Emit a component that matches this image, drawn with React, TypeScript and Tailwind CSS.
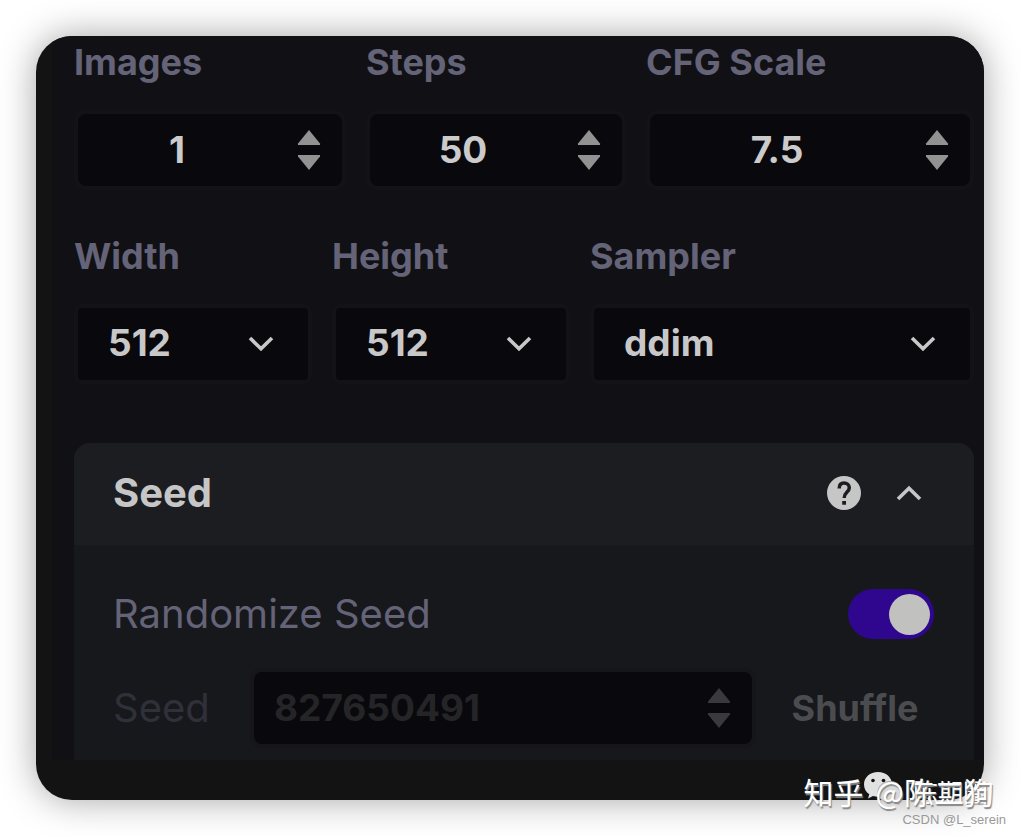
import { useState } from "react";

const LABEL = "block text-[36px] leading-[48px] font-bold text-[#646378]";
const BOX = "flex h-20 w-full rounded-xl border-4 border-[#131317] bg-[#09090d]";

function Stepper({ dim = false, name }: { dim?: boolean; name: string }) {
  return (
    <span className={`flex w-[66px] shrink-0 flex-col items-center justify-center gap-2.5 ${dim ? "text-[#3a3a3c]" : "text-[#929292]"}`}>
      <button type="button" aria-label={`Increase ${name}`} disabled={dim}>
        <svg width="24" height="15" viewBox="0 0 24 15" fill="currentColor" className="block"><path d="M12 0L23 13.5V15H1V13.5Z" /></svg>
      </button>
      <button type="button" aria-label={`Decrease ${name}`} disabled={dim}>
        <svg width="24" height="15" viewBox="0 0 24 15" fill="currentColor" className="block"><path d="M12 15L23 1.5V0H1V1.5Z" /></svg>
      </button>
    </span>
  );
}

function NumberField({ id, label, value }: { id: string; label: string; value: string }) {
  return (
    <div className="flex min-w-0 flex-col gap-6">
      <label htmlFor={id} className={LABEL}>{label}</label>
      <div className={BOX}>
        <input id={id} type="text" inputMode="decimal" defaultValue={value} className="min-w-0 flex-1 bg-transparent text-center text-[37px] font-bold text-[#cbcbcb] outline-none" />
        <Stepper name={label} />
      </div>
    </div>
  );
}

function Chevron({ up = false }: { up?: boolean }) {
  return (
    <svg width="26" height="16" viewBox="0 0 26 16" fill="none" stroke="currentColor" strokeWidth="3.6" className="block">
      <path d={up ? "M2 14L13 3.2L24 14" : "M2 2L13 12.8L24 2"} />
    </svg>
  );
}

function SelectField({ id, label, value }: { id: string; label: string; value: string }) {
  return (
    <div className="flex min-w-0 flex-col gap-6">
      <label htmlFor={id} className={LABEL}>{label}</label>
      <div className="grid h-20 items-center text-[#c8c8c8]">
        <select id={id} defaultValue={value} className="col-start-1 row-start-1 h-20 w-full appearance-none rounded-lg border-4 border-[#131317] bg-[#09090d] pr-16 pb-0.5 pl-[30px] text-[37px] font-bold outline-none">
          <option>{value}</option>
        </select>
        <span className="pointer-events-none col-start-1 row-start-1 mr-[38px] justify-self-end"><Chevron /></span>
      </div>
    </div>
  );
}

function ChatLogo() {
  return (
    <svg width="38" height="34" viewBox="0 0 38 34" className="block">
      <path d="M14 0C6 0 0 5.4 0 12.4C0 16.6 2.1 20 5.3 22.2L4 26.5L9 24C10.600 24.500 12.300 24.700 14 24.700C22 24.700 28 19.400 28 12.400S22 0 14 0Z" fill="#e1e1e1" />
      <circle cx="9" cy="8.500" r="1.800" fill="#131313" />
      <circle cx="19.500" cy="8.500" r="1.800" fill="#131313" />
      <path d="M26 9.500C19 9.500 14 14 14 20S19 30.500 26 30.500C27.500 30.500 29 30.300 30.300 29.800L35 32.500L33.800 28.300C36.400 26.400 38 23.500 38 20C38 14 33 9.500 26 9.500Z" fill="#d9d9d9" stroke="#aaa" />
    </svg>
  );
}

export default function App() {
  const [random, setRandom] = useState(true);
  const [open, setOpen] = useState(true);
  return (
    <div className="relative min-h-screen bg-white p-9 font-[Inter,'Noto_Sans_CJK_SC',sans-serif]">
      <main className="overflow-hidden rounded-[36px] bg-[#131313] pb-10 pl-4 shadow-[0_0_36px_rgba(0,0,0,0.36)]">
        <div className="bg-[#111115] pt-0.5 pr-2.5 pl-[22px]">
          <div className="grid grid-cols-[272fr_260fr_328fr] gap-5">
            <NumberField id="images" label="Images" value="1" />
            <NumberField id="steps" label="Steps" value="50" />
            <NumberField id="cfg" label="CFG Scale" value="7.5" />
          </div>
          <div className="mt-[42px] grid grid-cols-[238fr_238fr_384fr] gap-5">
            <SelectField id="width" label="Width" value="512" />
            <SelectField id="height" label="Height" value="512" />
            <SelectField id="sampler" label="Sampler" value="ddim" />
          </div>
          <section className="mt-[59px] overflow-hidden rounded-t-2xl bg-[#17181c]">
            <header className="flex h-[102px] items-center bg-[#1c1d21] pr-[52px] pb-0.5 pl-[39px] text-[#c6c6c6]">
              <h2 className="flex-1 text-[40px] leading-[48px] font-bold">Seed</h2>
              <button type="button" aria-label="Help" className="mr-[35px]">
                <svg width="34" height="34" viewBox="0 0 34 34" className="block">
                  <circle cx="17" cy="17" r="17" fill="currentColor" />
                  <path d="M12.200 12.500C12.200 8.800 14.100 7 17 7S22.300 8.900 22.300 11.800C22.300 16.200 17.200 16 17.200 22" fill="none" stroke="#1c1d21" strokeWidth="3.500" />
                  <path d="M15.200 25h3.800v3.800h-3.800z" fill="#1c1d21" />
                </svg>
              </button>
              <button type="button" aria-label="Toggle seed section" aria-expanded={open} onClick={() => setOpen(!open)}>
                <Chevron up={open} />
              </button>
            </header>
            {open && (
              <div className="pt-[43px] pr-10 pb-3 pl-[39px]">
                <label className="flex h-[52px] items-center text-[40px] text-[#646378]">
                  <span className="flex-1">Randomize Seed</span>
                  <input type="checkbox" role="switch" checked={random} onChange={() => setRandom(!random)} className="peer sr-only" />
                  <span className="flex h-[50px] w-[86px] items-center rounded-full bg-[#333] px-1 peer-checked:justify-end peer-checked:bg-[#2f078e]">
                    <span className="size-[41px] rounded-full bg-[#c1c1c0]" />
                  </span>
                </label>
                <div className="mt-7 flex items-center">
                  <label htmlFor="seed" className="w-[137px] shrink-0 text-[40px] text-[#2f3039]">Seed</label>
                  <div className="flex h-20 min-w-0 flex-1 rounded-xl border-4 border-[#15151a] bg-[#09090d]">
                    <input id="seed" disabled={random} defaultValue="827650491" className="min-w-0 flex-1 bg-transparent pl-5 text-[37px] font-bold text-[#252528] outline-none" />
                    <Stepper dim={random} name="seed" />
                  </div>
                  <button type="button" disabled={random} className="w-[178px] shrink-0 pl-5 text-center text-[36px] font-bold text-[#4b4c50]">Shuffle</button>
                </div>
              </div>
            )}
          </section>
        </div>
      </main>
      <div className="pointer-events-none absolute top-[772px] right-[26px] whitespace-nowrap text-white">
        <div className="absolute top-0 left-[60px]"><ChatLogo /></div>
        <div className="absolute top-[5px] right-[6px] font-['Noto_Sans_CJK_SC',sans-serif] text-[25px] leading-[28px] [text-shadow:1px_1px_1px_#777]">陈期圈</div>
        <div className="relative flex gap-3 font-['Noto_Sans_CJK_SC',sans-serif] text-[30px] leading-[38px] [text-shadow:1px_2px_1px_#888]">
          <span>知乎</span>
          <span>@陈二狗</span>
        </div>
      </div>
      <div className="pointer-events-none absolute top-[812px] right-[14px] font-['Liberation_Sans',sans-serif] text-[13px] leading-[16px] text-[#999]">CSDN @L_serein</div>
    </div>
  );
}
